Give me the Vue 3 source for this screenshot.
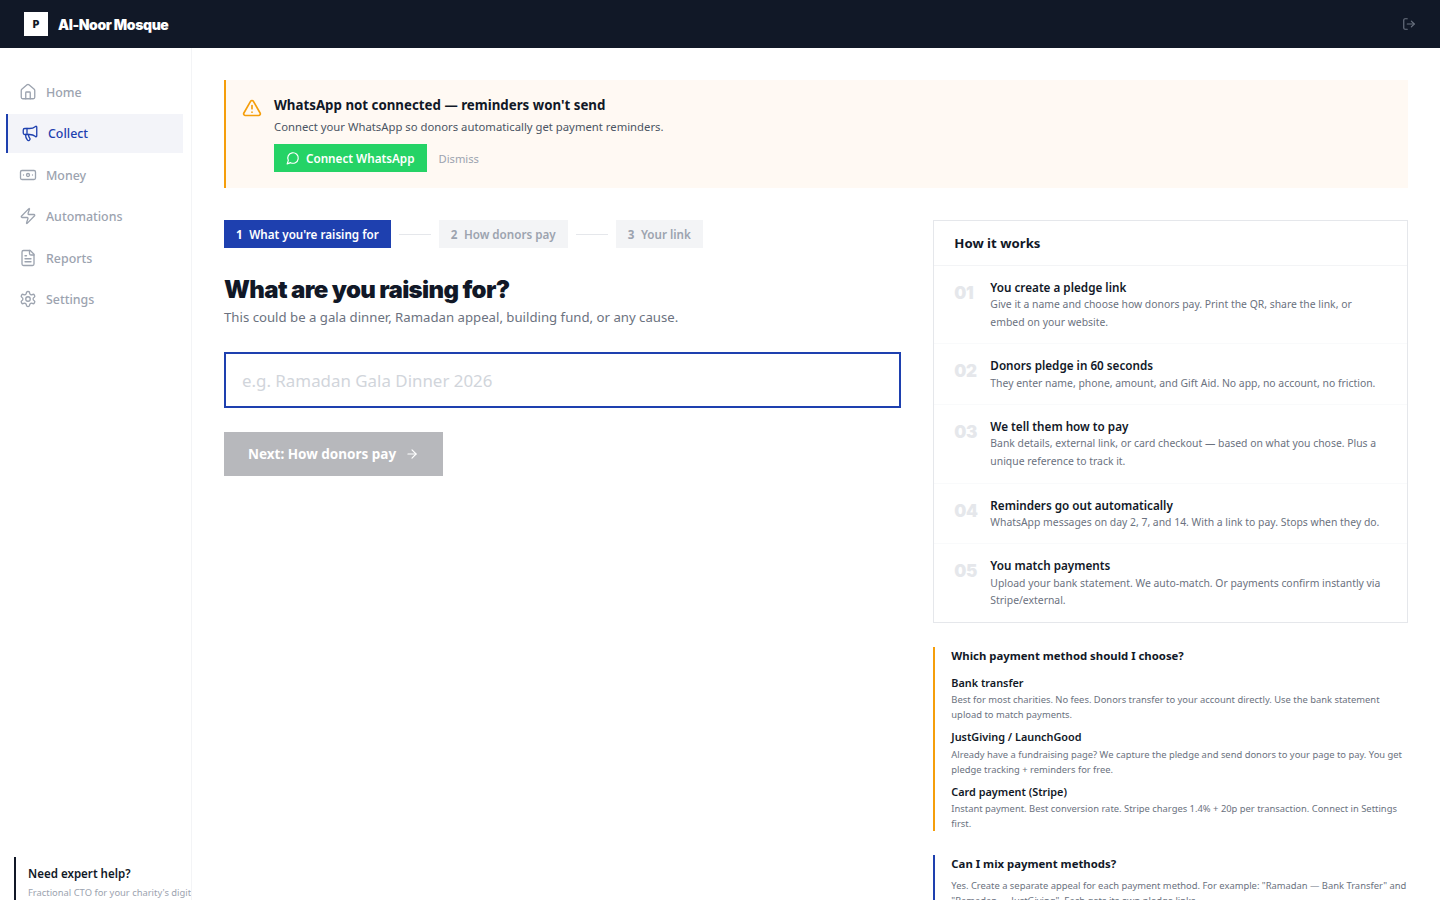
<script setup>
const nav = [
  { label: 'Home', icon: 'home' },
  { label: 'Collect', icon: 'mega', active: true },
  { label: 'Money', icon: 'money' },
  { label: 'Automations', icon: 'zap' },
  { label: 'Reports', icon: 'file' },
  { label: 'Settings', icon: 'gear' }
]
const steps = [
  { t: 'You create a pledge link', d: 'Give it a name and choose how donors pay. Print the QR, share the link, or embed on your website.' },
  { t: 'Donors pledge in 60 seconds', d: 'They enter name, phone, amount, and Gift Aid. No app, no account, no friction.' },
  { t: 'We tell them how to pay', d: 'Bank details, external link, or card checkout — based on what you chose. Plus a unique reference to track it.' },
  { t: 'Reminders go out automatically', d: 'WhatsApp messages on day 2, 7, and 14. With a link to pay. Stops when they do.' },
  { t: 'You match payments', d: 'Upload your bank statement. We auto-match. Or payments confirm instantly via Stripe/external.' }
]
const methods = [
  { t: 'Bank transfer', d: 'Best for most charities. No fees. Donors transfer to your account directly. Use the bank statement upload to match payments.' },
  { t: 'JustGiving / LaunchGood', d: 'Already have a fundraising page? We capture the pledge and send donors to your page to pay. You get pledge tracking + reminders for free.' },
  { t: 'Card payment (Stripe)', d: 'Instant payment. Best conversion rate. Stripe charges 1.4% + 20p per transaction. Connect in Settings first.' }
]
</script>

<template>
  <div class="app">
    <header class="top">
      <div class="brand">
        <span class="logo">P</span>
        <span class="org">Al-Noor Mosque</span>
      </div>
      <svg class="out" viewBox="0 0 24 24"><path d="M9 21H5a2 2 0 0 1-2-2V5a2 2 0 0 1 2-2h4" /><path d="m16 17 5-5-5-5" /><path d="M21 12H9" /></svg>
    </header>
    <div class="body">
      <aside class="side">
        <nav class="nav">
          <a v-for="n in nav" :key="n.label" class="item" :class="{ active: n.active }">
            <svg class="ico" viewBox="0 0 24 24">
              <template v-if="n.icon === 'home'"><path d="M15 21v-8a1 1 0 0 0-1-1h-4a1 1 0 0 0-1 1v8" /><path d="M3 10a2 2 0 0 1 .709-1.528l7-5.999a2 2 0 0 1 2.582 0l7 5.999A2 2 0 0 1 21 10v9a2 2 0 0 1-2 2H5a2 2 0 0 1-2-2z" /></template>
              <template v-else-if="n.icon === 'mega'"><path d="M11 6a13 13 0 0 0 8.4-2.8A1 1 0 0 1 21 4v12a1 1 0 0 1-1.6.8A13 13 0 0 0 11 14H5a2 2 0 0 1-2-2V8a2 2 0 0 1 2-2z" /><path d="M6 14a12 12 0 0 0 2.4 7.2 2 2 0 0 0 3.2-2.4A8 8 0 0 1 10 14" /><path d="M8 6v8" /></template>
              <template v-else-if="n.icon === 'money'"><rect x="2" y="6" width="20" height="12" rx="2" /><circle cx="12" cy="12" r="2" /><path d="M6 12h.01M18 12h.01" /></template>
              <template v-else-if="n.icon === 'zap'"><path d="M4 14a1 1 0 0 1-.78-1.63l9.9-10.2a.5.5 0 0 1 .86.46l-1.92 6.02A1 1 0 0 0 13 10h7a1 1 0 0 1 .78 1.63l-9.9 10.2a.5.5 0 0 1-.86-.46l1.92-6.02A1 1 0 0 0 11 14z" /></template>
              <template v-else-if="n.icon === 'file'"><path d="M15 2H6a2 2 0 0 0-2 2v16a2 2 0 0 0 2 2h12a2 2 0 0 0 2-2V7z" /><path d="M14 2v4a2 2 0 0 0 2 2h4" /><path d="M10 9H8M16 13H8M16 17H8" /></template>
              <template v-else><path d="M12.22 2h-.44a2 2 0 0 0-2 2v.18a2 2 0 0 1-1 1.73l-.43.25a2 2 0 0 1-2 0l-.15-.08a2 2 0 0 0-2.73.73l-.22.38a2 2 0 0 0 .73 2.73l.15.1a2 2 0 0 1 1 1.72v.51a2 2 0 0 1-1 1.74l-.15.09a2 2 0 0 0-.73 2.73l.22.38a2 2 0 0 0 2.73.73l.15-.08a2 2 0 0 1 2 0l.43.25a2 2 0 0 1 1 1.73V20a2 2 0 0 0 2 2h.44a2 2 0 0 0 2-2v-.18a2 2 0 0 1 1-1.73l.43-.25a2 2 0 0 1 2 0l.15.08a2 2 0 0 0 2.73-.73l.22-.39a2 2 0 0 0-.73-2.73l-.15-.08a2 2 0 0 1-1-1.74v-.5a2 2 0 0 1 1-1.74l.15-.09a2 2 0 0 0 .73-2.73l-.22-.38a2 2 0 0 0-2.73-.73l-.15.08a2 2 0 0 1-2 0l-.43-.25a2 2 0 0 1-1-1.73V4a2 2 0 0 0-2-2z" /><circle cx="12" cy="12" r="3" /></template>
            </svg>
            <span>{{ n.label }}</span>
          </a>
        </nav>
        <div class="help">
          <p class="help-t">Need expert help?</p>
          <p class="help-d">Fractional CTO for your charity's digital strategy</p>
        </div>
      </aside>
      <main class="main">
        <section class="alert">
          <svg class="warn" viewBox="0 0 24 24"><path d="m21.73 18-8-14a2 2 0 0 0-3.48 0l-8 14A2 2 0 0 0 4 21h16a2 2 0 0 0 1.73-3" /><path d="M12 9v4" /><path d="M12 17h.01" /></svg>
          <div class="alert-body">
            <p class="alert-t">WhatsApp not connected — reminders won't send</p>
            <p class="alert-d">Connect your WhatsApp so donors automatically get payment reminders.</p>
            <div class="alert-acts">
              <button class="wa">
                <svg class="chat" viewBox="0 0 24 24"><path d="M7.9 20A9 9 0 1 0 4 16.1L2 22Z" /></svg>
                Connect WhatsApp
              </button>
              <span class="dismiss">Dismiss</span>
            </div>
          </div>
        </section>
        <div class="cols">
          <div class="left">
            <div class="stepper">
              <span class="pill on"><b>1</b>What you're raising for</span>
              <i class="line"></i>
              <span class="pill"><b>2</b>How donors pay</span>
              <i class="line"></i>
              <span class="pill"><b>3</b>Your link</span>
            </div>
            <h1 class="title">What are you raising for?</h1>
            <p class="sub">This could be a gala dinner, Ramadan appeal, building fund, or any cause.</p>
            <input class="field" placeholder="e.g. Ramadan Gala Dinner 2026" />
            <button class="next">
              Next: How donors pay
              <svg class="arrow" viewBox="0 0 24 24"><path d="M5 12h14" /><path d="m12 5 7 7-7 7" /></svg>
            </button>
          </div>
          <div class="right">
            <section class="how">
              <h2 class="how-h">How it works</h2>
              <div v-for="(s, i) in steps" :key="s.t" class="how-row">
                <span class="num">0{{ i + 1 }}</span>
                <div>
                  <p class="how-t">{{ s.t }}</p>
                  <p class="how-d">{{ s.d }}</p>
                </div>
              </div>
            </section>
            <section class="faq amber">
              <h3 class="faq-h">Which payment method should I choose?</h3>
              <div v-for="m in methods" :key="m.t" class="method">
                <p class="m-t">{{ m.t }}</p>
                <p class="m-d">{{ m.d }}</p>
              </div>
            </section>
            <section class="faq blue">
              <h3 class="faq-h">Can I mix payment methods?</h3>
              <p class="m-d mix">Yes. Create a separate appeal for each payment method. For example: "Ramadan — Bank Transfer" and "Ramadan — JustGiving". Each gets its own pledge links.</p>
            </section>
          </div>
        </div>
      </main>
    </div>
  </div>
</template>

<style>
html, body { margin: 0; height: 100%; overflow: hidden; background: #fff; }
</style>
<style scoped>
* { box-sizing: border-box; }
p, h1, h2, h3 { margin: 0; }
.app { height: 100vh; overflow: hidden; font-family: "Noto Sans", sans-serif; color: #111827; display: flex; flex-direction: column; }
.top { height: 48px; flex: none; background: #111827; display: flex; align-items: center; justify-content: space-between; padding: 0 24px; }
.brand { display: flex; align-items: center; gap: 10px; }
.logo { width: 24px; height: 24px; background: #fff; color: #111827; font: 900 10px Inter, sans-serif; display: flex; align-items: center; justify-content: center; }
.org { color: #fff; font: 900 14px Inter, sans-serif; letter-spacing: -0.4px; }
.out { width: 14px; height: 14px; fill: none; stroke: #6b7280; stroke-width: 2; stroke-linecap: round; stroke-linejoin: round; }
.body { flex: 1; min-height: 0; display: flex; }
.side { width: 192px; flex: none; border-right: 1px solid #f3f4f6; display: flex; flex-direction: column; justify-content: space-between; overflow: hidden; height: 852px; }
.nav { padding: 24px 8px 0; display: flex; flex-direction: column; gap: 2px; }
.item { display: flex; align-items: center; gap: 9px; padding: 10px 12px 10px 11px; font-size: 12.4px; line-height: 19.5px; font-weight: 500; color: #9ca3af; }
.item span { position: relative; top: 0.5px; }
.item.active { margin-left: -2px; border-left: 2px solid #1e40af; padding-left: 13px; background: #f3f4f9; color: #1e40af; }
.ico { width: 18px; height: 18px; flex: none; fill: none; stroke: currentColor; stroke-width: 1.75; stroke-linecap: round; stroke-linejoin: round; }
.help { margin: 0 0 0 14px; border-left: 2px solid #111827; padding: 8px 12px 0; height: 43px; overflow: hidden; flex: none; }
.help-t { font-size: 11.55px; line-height: 18px; font-weight: 600; color: #111827; }
.help-d { font-size: 9.4px; line-height: 15px; margin-top: 2px; color: #9ca3af; white-space: nowrap; }
.main { flex: 1; min-width: 0; padding: 32px; overflow: hidden; }
.alert { background: #fff9f3; border-left: 2px solid #f59e0b; padding: 15px 16px 16px; height: 108px; display: flex; gap: 12px; }
.warn { width: 20px; height: 20px; margin-top: 3px; flex: none; fill: none; stroke: #f59e0b; stroke-width: 2; stroke-linecap: round; stroke-linejoin: round; }
.alert-t { font-size: 13.3px; line-height: 21px; font-weight: 700; color: #111827; }
.alert-d { font-size: 11.3px; line-height: 18px; margin-top: 2px; color: #4b5563; }
.alert-acts { display: flex; align-items: center; gap: 12px; margin-top: 8px; }
.wa { height: 28px; border: 0; background: #25d366; color: #fff; font: 600 11.7px "Noto Sans", sans-serif; padding: 0 12px; display: flex; align-items: center; gap: 6px; }
.chat { width: 14px; height: 14px; fill: none; stroke: #fff; stroke-width: 2; stroke-linecap: round; stroke-linejoin: round; }
.dismiss { font-size: 11.2px; color: #9ca3af; }
.cols { display: grid; grid-template-columns: 677.33px 474.67px; gap: 32px; margin-top: 32px; }
.stepper { display: flex; align-items: center; gap: 8px; }
.pill { height: 28px; padding: 0 12px; background: #f3f4f6; color: #9ca3af; font-size: 11.65px; font-weight: 600; display: flex; align-items: center; }
.pill b { font-weight: 700; margin-right: 6.5px; }
.pill.on { background: #1e40af; color: #fff; }
.line { width: 32px; height: 1px; background: #e5e7eb; }
.title { font: 900 24px/32px Inter, sans-serif; letter-spacing: -0.65px; margin-top: 26px; color: #111827; }
.sub { font-size: 13.2px; line-height: 21px; color: #6b7280; margin-top: 1px; }
.field { display: block; width: 100%; height: 56px; margin-top: 24px; border: 2px solid #1e40af; outline: 0; padding: 0 16px; font: 400 16.9px "Noto Sans", sans-serif; color: #111827; background: #fff; border-radius: 0; }
.field::placeholder { color: #d1d5db; opacity: 1; }
.next { margin-top: 24px; height: 44px; border: 0; background: #b7b8bc; color: #fff; font: 700 13.5px "Noto Sans", sans-serif; padding: 0 24px 1px; display: flex; align-items: center; gap: 8px; }
.arrow { width: 14px; height: 14px; margin-left: 1px; fill: none; stroke: #fff; stroke-width: 2; stroke-linecap: round; stroke-linejoin: round; }
.how { border: 1px solid #e5e7eb; }
.how-h { font-size: 13.2px; line-height: 21px; font-weight: 700; color: #111827; padding: 11.5px 20px; border-bottom: 1px solid #f3f4f6; }
.how-row { display: flex; gap: 16px; padding: 12px 20px; border-bottom: 1px solid #f9fafb; }
.how-row:last-child { border-bottom: 0; }
.num { width: 20px; flex: none; font: 900 17px/28px Inter, sans-serif; letter-spacing: -0.3px; color: #e5e7eb; text-align: left; padding-top: 1px; white-space: nowrap; }
.how-t { font-size: 11.7px; line-height: 18.2px; font-weight: 600; color: #111827; }
.how-d { font-size: 10.4px; line-height: 17.6px; color: #6b7280; }
.faq { padding-left: 16px; border-left: 2px solid #f59e0b; }
.amber { margin-top: 24px; }
.blue { border-left-color: #1e40af; margin-top: 24px; }
.faq-h { font-size: 11.35px; line-height: 18px; font-weight: 700; color: #111827; }
.method { margin-top: 7px; }
.faq-h + .method { margin-top: 10px; }
.m-t { font-size: 10.85px; line-height: 16.5px; font-weight: 600; color: #111827; }
.m-d { font-size: 9.4px; line-height: 15px; color: #6b7280; margin-top: 1px; }
.mix { margin-top: 4.5px; }
</style>
